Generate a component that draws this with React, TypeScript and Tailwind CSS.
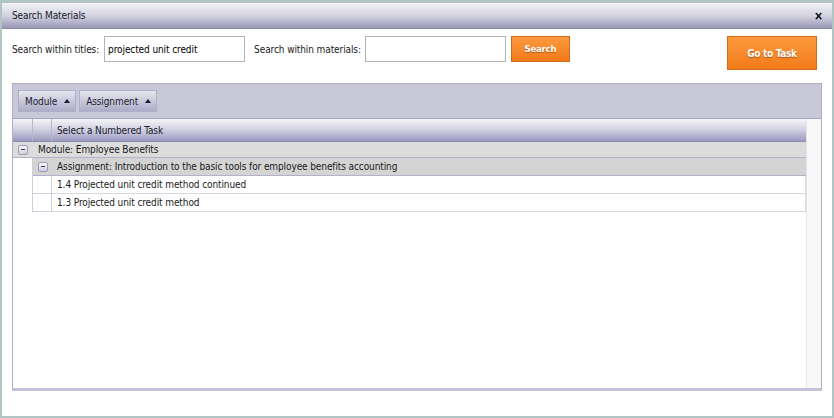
import React from 'react';

const font = { fontFamily: "'DejaVu Sans Condensed', 'Liberation Sans', Arial, sans-serif" };

const Toggle: React.FC = () => (
  <span className="flex h-[10px] w-[10px] items-center justify-center rounded-[2px] border border-[#9c9cb4] bg-gradient-to-b from-[#f6f6fa] to-[#cfcfdc]">
    <span className="h-px w-[4px] bg-[#404060]" />
  </span>
);

const GroupButton: React.FC<{ label: string }> = ({ label }) => (
  <button className="flex h-[22px] items-center gap-[7px] border border-[#b0aec8] bg-gradient-to-b from-[#e6e6ee] to-[#aeacc8] pl-[6px] pr-[5px] text-[10px] tracking-[-0.1px] text-[#1c1c30]">
    {label}
    <span className="h-0 w-0 border-x-[3px] border-b-[4px] border-x-transparent border-b-[#1c1c30]" />
  </button>
);

const App: React.FC = () => {
  return (
    <div className="h-[418px] w-[834px] bg-[#b3c4c4] px-[2px] pt-[3px] pb-[2px]" style={font}>
      <div className="flex h-full flex-col bg-white">
        {/* Title bar */}
        <div className="flex h-[26px] items-center justify-between border-b border-[#8a88a8] bg-gradient-to-b from-[#f2f2f6] via-[#d4d3e0] to-[#9a98b6] pl-[10px] pr-[9px] text-[10px] tracking-[-0.1px] text-[#1a1a2c]">
          <span>Search Materials</span>
          <span className="text-[12px] font-bold leading-none text-black">×</span>
        </div>

        <div className="flex flex-1 flex-col px-[10px] pt-[7px] pb-[25px] text-[10px] tracking-[-0.1px]">
          {/* Search row */}
          <div className="flex items-start">
            <div className="flex h-[26px] items-center text-[#1a1a1a]">Search within titles:</div>
            <input
              className="ml-[5px] h-[26px] w-[141px] border border-[#b4b4b4] px-[3px] text-[10px] tracking-[-0.1px] text-black outline-none"
              defaultValue="projected unit credit"
              style={font}
            />
            <div className="ml-[9px] flex h-[26px] items-center text-[#1a1a1a]">Search within materials:</div>
            <input className="ml-[4px] h-[26px] w-[141px] border border-[#b4b4b4] px-[3px] text-[10px] outline-none" style={font} />
            <button className="ml-[5px] h-[26px] w-[59px] border border-[#d36a1c] bg-gradient-to-b from-[#fc9a3c] to-[#f27a18] text-[9.5px] font-bold tracking-[-0.2px] text-white [text-shadow:0_1px_1px_rgba(120,50,0,0.6)]">
              Search
            </button>
            <button className="ml-auto mr-[5px] h-[34px] w-[90px] border border-[#d36a1c] bg-gradient-to-b from-[#fc9a3c] to-[#f27a18] text-[10px] font-bold tracking-[-0.3px] text-white [text-shadow:0_1px_1px_rgba(120,50,0,0.6)]">
              Go to Task
            </button>
          </div>

          {/* Grid */}
          <div className="mt-[13px] flex flex-1 flex-col border border-[#b0aec6] border-b-[3px] border-b-[#c4c2d6]">
            <div className="flex h-[35px] items-center gap-[3px] border-b border-[#a8a6c0] bg-[#c8c8d9] pl-[5px]">
              <GroupButton label="Module" />
              <GroupButton label="Assignment" />
            </div>
            <div className="flex flex-1">
              <div className="flex flex-1 flex-col text-[#1a1a1a]">
                {/* Header */}
                <div className="flex h-[23px] border-b border-[#8e8cb0] bg-gradient-to-b from-[#f4f4f8] via-[#d0cfe0] to-[#9c9abf] text-[#1a1a2c]">
                  <div className="w-[20px] border-r border-[#b8b6cc]" />
                  <div className="w-[19px] border-r border-[#b8b6cc]" />
                  <div className="flex items-center pl-[5px]">Select a Numbered Task</div>
                </div>
                {/* Module row */}
                <div className="flex h-[16px] items-center border-b border-[#b4b2ca] bg-[#dcdcdc]">
                  <div className="flex w-[20px] justify-center">
                    <Toggle />
                  </div>
                  <span className="pl-[5px]">Module: Employee Benefits</span>
                </div>
                {/* Assignment row */}
                <div className="flex h-[18px]">
                  <div className="w-[20px] border-r border-[#d0d0dc]" />
                  <div className="flex flex-1 items-center border-b border-[#b4b2ca] bg-[#d4d4d4]">
                    <div className="flex w-[19px] justify-center">
                      <Toggle />
                    </div>
                    <span className="pl-[5px]">Assignment: Introduction to the basic tools for employee benefits accounting</span>
                  </div>
                </div>
                {['1.4 Projected unit credit method continued', '1.3 Projected unit credit method'].map((t) => (
                  <div key={t} className="flex h-[18px]">
                    <div className="w-[20px] border-r border-[#d0d0dc]" />
                    <div className="w-[19px] border-r border-b border-[#d0d0dc]" />
                    <div className="flex flex-1 items-center border-r border-b border-[#d8d8e2] pl-[5px]">{t}</div>
                  </div>
                ))}
                <div className="flex-1" />
              </div>
              {/* Scroll gutter */}
              <div className="w-[15px] border-l border-[#e4e4ea] bg-[#f8f8f8]" />
            </div>
          </div>
        </div>
      </div>
    </div>
  );
};

export default App;
